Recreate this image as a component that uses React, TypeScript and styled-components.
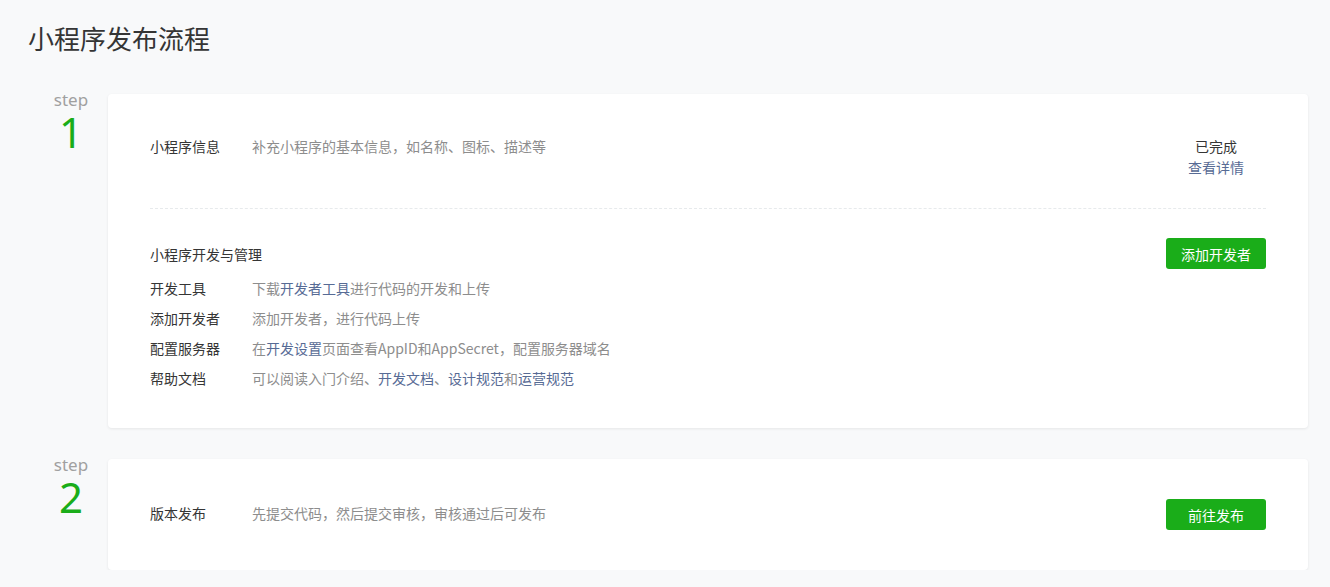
import React, {ReactElement} from "react";
import styled, {createGlobalStyle} from "styled-components";

const GlobalStyle = createGlobalStyle`
  body {
    margin: 0;
    background: #f8f9fa;
    font-family: "Noto Sans CJK SC", "Noto Sans", sans-serif;
    color: #353535;
  }
`;

const Page = styled.div`
  padding: 20px 22px 0 28px;
`;

const Title = styled.h2`
  margin: 0 0 38px;
  font-size: 26px;
  line-height: 36px;
  font-weight: normal;
  color: #353535;
`;

const StepList = styled.div`
  display: flex;
  flex-direction: column;
  gap: 31px;
`;

const StepRow = styled.div`
  display: flex;
  align-items: flex-start;
`;

const StepLabel = styled.div`
  width: 80px;
  padding-left: 6px;
  box-sizing: border-box;
  margin-top: -4px;
  text-align: center;
  flex-shrink: 0;
`;

const StepWord = styled.div`
  font-family: "Noto Sans", "Open Sans", sans-serif;
  font-size: 17px;
  line-height: 20px;
  color: #a0a0a0;
`;

const StepNumber = styled.div`
  font-family: "Noto Sans", "Open Sans", sans-serif;
  font-size: 42px;
  line-height: 44px;
  color: #1aad19;
`;

const Card = styled.div<{ $pad: string }>`
  flex: 1;
  background: #fff;
  border-radius: 4px;
  box-shadow: 0 1px 3px rgba(0, 0, 0, 0.08);
  padding: ${p => p.$pad};
`;

const InfoRow = styled.div`
  display: flex;
  align-items: flex-start;
  font-size: 14px;
  line-height: 21px;
`;

const Label = styled.div`
  width: 102px;
  flex-shrink: 0;
  color: #353535;
`;

const Desc = styled.div`
  flex: 1;
  color: #8d8d8d;
`;

const Status = styled.div`
  width: 100px;
  text-align: center;
  color: #353535;
`;

const Link = styled.a`
  color: #576b95;
  text-decoration: none;
`;

const Divider = styled.div`
  margin: 30px 0 29px;
  border-top: 1px dashed #e7eaec;
`;

const SectionHead = styled.div`
  display: flex;
  justify-content: space-between;
  align-items: center;
  font-size: 14px;
`;

const Items = styled.div`
  margin-top: 4px;
`;

const ItemRow = styled.div`
  display: flex;
  font-size: 14px;
  line-height: 30px;
`;

const CenterRow = styled.div`
  display: flex;
  align-items: center;
  font-size: 14px;
  line-height: 24px;
`;

const RowText = styled.div`
  display: flex;
  flex: 1;
  margin-top: -3px;
`;

const Button = styled.button`
  width: 100px;
  height: 31px;
  border: none;
  border-radius: 3px;
  background: #1aad19;
  color: #fff;
  font-family: inherit;
  font-size: 14px;
  cursor: pointer;
  flex-shrink: 0;
`;

const devItems: { label: string; desc: ReactElement }[] = [
    {
        label: "开发工具",
        desc: <>下载<Link href="#">开发者工具</Link>进行代码的开发和上传</>
    },
    {
        label: "添加开发者",
        desc: <>添加开发者，进行代码上传</>
    },
    {
        label: "配置服务器",
        desc: <>在<Link href="#">开发设置</Link>页面查看AppID和AppSecret，配置服务器域名</>
    },
    {
        label: "帮助文档",
        desc: <>可以阅读入门介绍、<Link href="#">开发文档</Link>、<Link href="#">设计规范</Link>和<Link href="#">运营规范</Link></>
    },
];

function Step({num, children}: { num: number; children: React.ReactNode }) {
    return (
        <StepRow>
            <StepLabel>
                <StepWord>step</StepWord>
                <StepNumber>{num}</StepNumber>
            </StepLabel>
            {children}
        </StepRow>
    );
}

export default function App(): ReactElement {
    return (
        <>
            <GlobalStyle/>
            <Page>
                <Title>小程序发布流程</Title>
                <StepList>
                    <Step num={1}>
                        <Card $pad="42px 42px 35px">
                            <InfoRow>
                                <Label>小程序信息</Label>
                                <Desc>补充小程序的基本信息，如名称、图标、描述等</Desc>
                                <Status>
                                    <div>已完成</div>
                                    <Link href="#">查看详情</Link>
                                </Status>
                            </InfoRow>
                            <Divider/>
                            <SectionHead>
                                <span>小程序开发与管理</span>
                                <Button>添加开发者</Button>
                            </SectionHead>
                            <Items>
                                {devItems.map(item => (
                                    <ItemRow key={item.label}>
                                        <Label>{item.label}</Label>
                                        <Desc>{item.desc}</Desc>
                                    </ItemRow>
                                ))}
                            </Items>
                        </Card>
                    </Step>
                    <Step num={2}>
                        <Card $pad="40px 42px">
                            <CenterRow>
                                <RowText>
                                    <Label>版本发布</Label>
                                    <Desc>先提交代码，然后提交审核，审核通过后可发布</Desc>
                                </RowText>
                                <Button>前往发布</Button>
                            </CenterRow>
                        </Card>
                    </Step>
                </StepList>
            </Page>
        </>
    );
}
